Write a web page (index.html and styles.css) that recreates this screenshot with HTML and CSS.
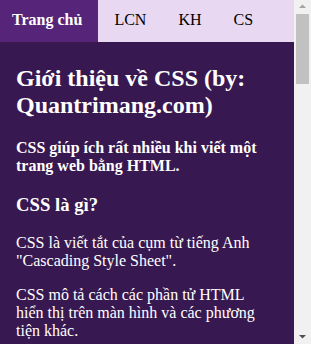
FILE: index.html
```html
<!DOCTYPE html>
<html lang="vi">
<head>
    <meta charset="UTF-8">
    <meta name="viewport" content="width=device-width, initial-scale=1.0">
    <title>Giới thiệu về CSS</title>
    <link rel="stylesheet" href="styles.css">
</head>
<body>
    <div class="page">
        <div class="topnav">
            <a class="active" href="#">Trang chủ</a>
            <a href="#">LCN</a>
            <a href="#">KH</a>
            <a href="#">CS</a>
        </div>

        <div class="content">
            <h2>Giới thiệu về CSS (by: Quantrimang.com)</h2>
            <p class="lead">CSS giúp ích rất nhiều khi viết một trang web bằng HTML.</p>
            <h3>CSS là gì?</h3>
            <p>CSS là viết tắt của cụm từ tiếng Anh "Cascading Style Sheet".</p>
            <p>CSS mô tả cách các phần tử HTML hiển thị trên màn hình và các phương tiện khác.</p>
        </div>
    </div>

    <!-- thanh cuộn giả -->
    <div class="scrollbar">
        <svg class="arrow" width="17" height="14" viewBox="0 0 17 14">
            <path d="M5 8 L8.5 4.5 L12 8 Z" fill="#a3a3a3"/>
        </svg>
        <div class="thumb"></div>
        <div class="track"></div>
        <svg class="arrow" width="17" height="14" viewBox="0 0 17 14">
            <path d="M5 5 L12 5 L8.5 8.5 Z" fill="#505050"/>
        </svg>
    </div>
</body>
</html>
```

FILE: styles.css
```css
html, body {
    height: 100%;
}

body {
    margin: 0;
    display: flex;
    overflow: hidden;
    font-family: "Liberation Serif", "Times New Roman", serif;
    background: #381850;
    color: #fff;
}

.page {
    flex: 1;
    min-width: 0;
}

.topnav {
    display: flex;
    background: #e8d8f2;
}

.topnav a {
    padding: 10px 16px 13px;
    line-height: 19px;
    font-size: 16px;
    color: #000;
    text-decoration: none;
}

.topnav a.active {
    padding-left: 12px;
    background: #562478;
    color: #fff;
    font-weight: bold;
}

.content {
    padding: 3px 26px 0 16px;
}

.content h2 {
    font-size: 24px;
}

.content .lead {
    font-weight: bold;
}

.scrollbar {
    width: 17px;
    height: 100%;
    flex-shrink: 0;
    display: flex;
    flex-direction: column;
    background: #f1f1f1;
}

.arrow {
    display: block;
    flex-shrink: 0;
}

.thumb {
    height: 70px;
    margin: 0 2px;
    background: #c1c1c1;
}

.track {
    flex: 1;
}
```
